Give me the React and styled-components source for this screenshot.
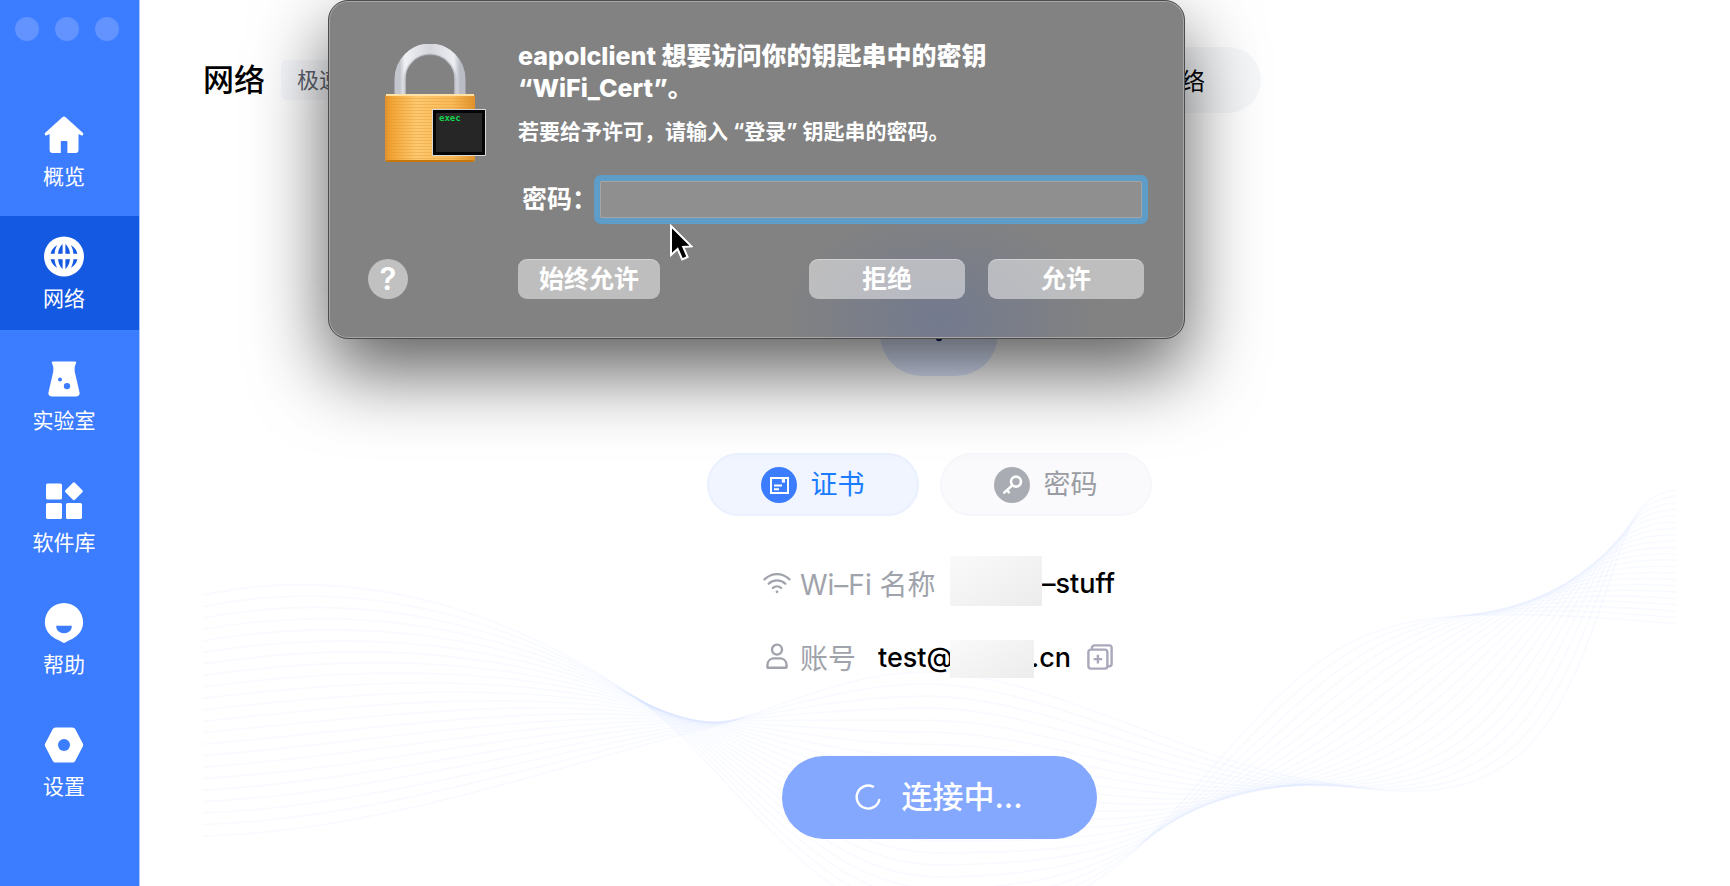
import React, { useState } from "react";
import styled, { createGlobalStyle } from "styled-components";

const NAV = [
  { id: "home", label: "概览", Icon: HomeIcon },
  { id: "network", label: "网络", Icon: GlobeIcon },
  { id: "lab", label: "实验室", Icon: FlaskIcon },
  { id: "apps", label: "软件库", Icon: AppsIcon },
  { id: "help", label: "帮助", Icon: HelpIcon },
  { id: "settings", label: "设置", Icon: SettingsIcon },
];

// first and last line of the background wave, the rest is blended between them
const WAVE_A = [
  [203, 595], [345, 565], [500, 600], [650, 708], [735, 775], [820, 925], [940, 925],
  [1050, 925], [1115, 880], [1190, 793], [1290, 680], [1335, 617], [1480, 615],
  [1550, 613], [1615, 618], [1676, 624],
];
const WAVE_B = [
  [203, 836], [380, 832], [560, 765], [715, 726], [785, 706], [850, 672], [925, 672],
  [1050, 672], [1200, 770], [1330, 783], [1520, 820], [1560, 730], [1610, 580],
  [1632, 510], [1645, 494], [1676, 490],
];
const WAVE_LINES = 22;

const wavePath = (k) => {
  const pts = WAVE_A.map(([x, y], i) => [
    x + (WAVE_B[i][0] - x) * k,
    y + (WAVE_B[i][1] - y) * k,
  ]);
  return `M${pts[0]} C${pts.slice(1).join(" ")}`;
};

export default function App() {
  const [page, setPage] = useState("network");
  const [method, setMethod] = useState("cert");
  const [password, setPassword] = useState("");

  return (
    <>
      <GlobalStyle />
      <Page>
        <Sidebar>
          <WindowDots>
            <i />
            <i />
            <i />
          </WindowDots>
          <Nav>
            {NAV.map(({ id, label, Icon }) => (
              <NavItem
                key={id}
                href={`#${id}`}
                $active={id === page}
                onClick={() => setPage(id)}
              >
                <Icon />
                <span>{label}</span>
              </NavItem>
            ))}
          </Nav>
        </Sidebar>

        <Main>
          <Wave viewBox="203 488 1473 398" aria-hidden="true">
            {Array.from({ length: WAVE_LINES }).map((_, i) => (
              <path key={i} d={wavePath(i / (WAVE_LINES - 1))} />
            ))}
          </Wave>

          <Header>
            <HeaderLeft>
              <h1>网络</h1>
              <Tag>极速</Tag>
            </HeaderLeft>
            <Segment>
              <span>网络</span>
            </Segment>
          </Header>

          <WifiTile>
            <WifiIcon size={64} />
          </WifiTile>

          <Methods>
            <Method type="button" $active={method === "cert"} onClick={() => setMethod("cert")}>
              <CertIcon />
              证书
            </Method>
            <Method type="button" $active={method === "pwd"} onClick={() => setMethod("pwd")}>
              <KeyIcon />
              密码
            </Method>
          </Methods>

          <Fields>
            <Field>
              <IconSlot>
                <WifiIcon size={28} />
              </IconSlot>
              <Label>Wi–Fi 名称</Label>
              <Redacted $tall />
              <Value>–stuff</Value>
            </Field>
            <Field>
              <IconSlot>
                <UserIcon />
              </IconSlot>
              <Label $short>账号</Label>
              <Value>test@</Value>
              <Redacted />
              <Value>.cn</Value>
              <CopyButton type="button" aria-label="复制">
                <CopyIcon />
              </CopyButton>
            </Field>
          </Fields>

          <Connect type="button">
            <Spinner viewBox="0 0 26 26">
              <path d="M18 2.6 A11.5 11.5 0 1 0 24.3 16" />
            </Spinner>
            连接中...
          </Connect>
        </Main>

        <Dialog role="dialog" aria-labelledby="keychain-title">
          <LockIcon />
          <DialogBody>
            <h2 id="keychain-title">
              eapolclient 想要访问你的钥匙串中的密钥
              <br />
              “WiFi_Cert”。
            </h2>
            <p>若要给予许可，请输入 “登录” 钥匙串的密码。</p>
            <PasswordRow>
              <label htmlFor="keychain-password">密码：</label>
              <input
                id="keychain-password"
                type="password"
                value={password}
                onChange={(e) => setPassword(e.target.value)}
              />
            </PasswordRow>
          </DialogBody>
          <HelpButton type="button">?</HelpButton>
          <Actions>
            <DialogButton type="button" $compact>
              始终允许
            </DialogButton>
            <DialogButton type="button">拒绝</DialogButton>
            <DialogButton type="button">允许</DialogButton>
          </Actions>
          <Pointer viewBox="0 0 24 38" aria-hidden="true">
            <path
              d="M2 2 L2 31 L8.6 25 L13.2 35.4 L18.6 33 L14.2 23 L22.4 22.4 Z"
              fill="#000"
              stroke="#fff"
              strokeWidth="2"
            />
          </Pointer>
        </Dialog>
      </Page>
    </>
  );
}

/* ---------------- icons ---------------- */

function HomeIcon() {
  return (
    <svg width="40" height="40" viewBox="0 0 40 40" fill="#fff">
      <path d="M18.6 2.6 a2 2 0 0 1 2.8 0 L39 18.4 a1.6 1.6 0 0 1 -2 2.4 L34.5 19.4 V35.5 a3 3 0 0 1 -3 3 H23.4 V27.5 a1 1 0 0 0 -1 -1 h-4.6 a1 1 0 0 0 -1 1 V38.5 H8.6 a3 3 0 0 1 -3 -3 V19.4 L3 20.8 a1.6 1.6 0 0 1 -2 -2.4 Z" />
    </svg>
  );
}

function GlobeIcon() {
  return (
    <svg width="40" height="40" viewBox="0 0 40 40">
      <circle cx="20" cy="20" r="20" fill="#fff" />
      <g fill="#1459e2">
        <path d="M14 17.2 C14.5 13 16.2 9.5 18.6 7.6 V17.2 Z M26 17.2 C25.5 13 23.8 9.5 21.4 7.6 V17.2 Z" />
        <path d="M14 22.8 C14.5 27 16.2 30.5 18.6 32.4 V22.8 Z M26 22.8 C25.5 27 23.8 30.5 21.4 32.4 V22.8 Z" />
        <path d="M6.6 17.2 C7.4 13.4 9.8 10.4 13.2 8.8 C11.6 11.4 10.8 14.2 10.6 17.2 Z M33.4 17.2 C32.6 13.4 30.2 10.4 26.8 8.8 C28.4 11.4 29.2 14.2 29.4 17.2 Z" />
        <path d="M6.6 22.8 C7.4 26.6 9.8 29.6 13.2 31.2 C11.6 28.6 10.8 25.8 10.6 22.8 Z M33.4 22.8 C32.6 26.6 30.2 29.6 26.8 31.2 C28.4 28.6 29.2 25.8 29.4 22.8 Z" />
      </g>
    </svg>
  );
}

function FlaskIcon() {
  return (
    <svg width="40" height="40" viewBox="0 0 40 40">
      <path
        d="M9 3 H31 a1.2 1.2 0 0 1 1.1 1.6 L30.8 8 C30.4 11 30.6 13 31.4 16 L35.6 34.2 a3 3 0 0 1 -3 3.7 H7.4 a3 3 0 0 1 -3 -3.7 L8.6 16 C9.4 13 9.6 11 9.2 8 L7.9 4.6 A1.2 1.2 0 0 1 9 3 Z"
        fill="#fff"
      />
      <circle cx="16" cy="21" r="2" fill="#3c7cff" />
      <circle cx="23" cy="27.6" r="3.2" fill="#3c7cff" />
    </svg>
  );
}

function AppsIcon() {
  return (
    <svg width="40" height="40" viewBox="0 0 40 40" fill="#fff">
      <rect x="2" y="3" width="16" height="16" rx="1.6" />
      <rect x="2" y="22.5" width="16" height="16" rx="1.6" />
      <rect x="22" y="22.5" width="16" height="16" rx="1.6" />
      <rect x="23.2" y="4.1" width="13.4" height="13.4" rx="1.4" transform="rotate(45 29.9 10.8)" />
    </svg>
  );
}

function HelpIcon() {
  return (
    <svg width="40" height="42" viewBox="0 0 40 42">
      <path
        d="M20 1 C31 1 39.6 9.6 39.6 21 C39.6 29.4 33.6 36 25.4 39.2 L21.2 41.4 a2.4 2.4 0 0 1 -2.4 0 L14.6 39.2 C6.4 36 .4 29.4 .4 21 C.4 9.6 9 1 20 1 Z"
        fill="#fff"
      />
      <path d="M12 24.4 H28 C28 29.2 24.6 32 20 32 C15.4 32 12 29.2 12 24.4 Z" fill="#3c7cff" />
    </svg>
  );
}

function SettingsIcon() {
  return (
    <svg width="40" height="40" viewBox="0 0 40 40">
      <path
        d="M11.4 3 H28.6 a3 3 0 0 1 2.6 1.5 L38.8 18.9 a3 3 0 0 1 0 3.2 L31.2 36.5 a3 3 0 0 1 -2.6 1.5 H11.4 a3 3 0 0 1 -2.6 -1.5 L1.2 22.1 a3 3 0 0 1 0 -3.2 L8.8 4.5 a3 3 0 0 1 2.6 -1.5 Z"
        fill="#fff"
      />
      <circle cx="20" cy="20.5" r="6" fill="#3c7cff" />
    </svg>
  );
}

function WifiIcon({ size }) {
  return (
    <svg
      width={size}
      height={size}
      viewBox="0 0 28 28"
      fill="none"
      stroke="currentColor"
      strokeWidth="2.2"
      strokeLinecap="round"
    >
      <path d="M1.5 10.4 C8.6 3.4 19.4 3.4 26.5 10.4" />
      <path d="M5.6 14.8 C10.4 10.2 17.6 10.2 22.4 14.8" />
      <path d="M9.8 19 C12.2 16.8 15.8 16.8 18.2 19" />
      <circle cx="14" cy="22.8" r="1.4" fill="currentColor" stroke="none" />
    </svg>
  );
}

function UserIcon() {
  return (
    <svg width="24" height="28" viewBox="0 0 24 28" fill="none" stroke="currentColor" strokeWidth="2.4">
      <circle cx="12" cy="6.6" r="5" />
      <path d="M2.4 22.4 C2.4 17.4 6 15.4 9 15.4 H15 C18 15.4 21.6 17.4 21.6 22.4 V24 a.8 .8 0 0 1 -.8 .8 H3.2 a.8 .8 0 0 1 -.8 -.8 Z" />
    </svg>
  );
}

function CopyIcon() {
  return (
    <svg width="26" height="26" viewBox="0 0 26 26" fill="none" stroke="currentColor" strokeWidth="2.4">
      <path d="M5 5.4 V3.6 A2.2 2.2 0 0 1 7.2 1.4 H22.4 A2.2 2.2 0 0 1 24.6 3.6 V20 A2.2 2.2 0 0 1 22.4 22.2 H20.6" />
      <rect x="1.4" y="5.6" width="19" height="19" rx="2.6" />
      <path d="M10.9 10.8 V19.4 M6.6 15.1 H15.2" />
    </svg>
  );
}

function CertIcon() {
  return (
    <svg width="36" height="36" viewBox="0 0 36 36" fill="none" stroke="#fff" strokeWidth="2">
      <circle cx="18" cy="18" r="18" fill="#3c7cff" stroke="none" />
      <rect x="10" y="11" width="17" height="15" />
      <path d="M13 18.6 H21 M13 22.2 H18" />
      <path d="M20.8 11 V15.6 H24 V11" fill="#fff" stroke="none" />
    </svg>
  );
}

function KeyIcon() {
  return (
    <svg width="36" height="36" viewBox="0 0 36 36" fill="none" stroke="#fff" strokeLinecap="round">
      <circle cx="18" cy="18" r="18" fill="#a9adb3" stroke="none" />
      <circle cx="22" cy="14.6" r="5" strokeWidth="2.6" />
      <path d="M18 18.6 L10.2 25.6" strokeWidth="2.6" />
      <path d="M13.2 23.4 L15 25.4" strokeWidth="2.4" />
    </svg>
  );
}

function LockIcon() {
  return (
    <LockArt viewBox="0 0 104 120" aria-hidden="true">
      <defs>
        <linearGradient id="steel" x1="0" y1="0" x2="1" y2="0">
          <stop offset="0" stopColor="#c3c6cd" />
          <stop offset=".08" stopColor="#f0f1f4" />
          <stop offset=".5" stopColor="#d4d6dc" />
          <stop offset=".9" stopColor="#eceef2" />
          <stop offset="1" stopColor="#b9bcc4" />
        </linearGradient>
        <linearGradient id="brass" x1="0" y1="0" x2="1" y2="0">
          <stop offset="0" stopColor="#e0912a" />
          <stop offset=".08" stopColor="#f3a637" />
          <stop offset=".35" stopColor="#fdc970" />
          <stop offset=".75" stopColor="#f9ba58" />
          <stop offset="1" stopColor="#e0912a" />
        </linearGradient>
        <pattern id="ribs" width="4" height="3" patternUnits="userSpaceOnUse">
          <rect width="4" height="1" fill="#e0922a" opacity=".35" />
        </pattern>
      </defs>
      <path d="M17 52 V35 A30 30 0 0 1 77 35 V52" fill="none" stroke="url(#steel)" strokeWidth="11" />
      <path d="M21.5 52 V36 A25.5 25.5 0 0 1 72.5 36 V52" fill="none" stroke="#9fa3ac" opacity=".4" strokeWidth="2" />
      <rect x="2" y="50" width="90" height="68" rx="3" fill="url(#brass)" />
      <rect x="2" y="52" width="90" height="63" fill="url(#ribs)" />
      <rect x="3" y="50" width="88" height="2" fill="#ffe2a4" />
      <rect x="3" y="116" width="88" height="2" rx="1" fill="#c6770c" />
      <rect x="49" y="65" width="54" height="47" rx="1" fill="#d6d9dc" />
      <rect x="50" y="66" width="52" height="45" fill="#050505" />
      <rect x="53" y="69" width="46" height="39" fill="#262626" />
      <text x="56" y="77" fill="#16d44e" fontSize="9" fontWeight="700" fontFamily="DejaVu Sans Mono, monospace">
        exec
      </text>
    </LockArt>
  );
}

/* ---------------- styled-components ---------------- */

const BLUE = "#3c7cff";
const BLUE_DARK = "#1459e2";
const MUTED = "#a0a3ab";

const GlobalStyle = createGlobalStyle`
  * {
    box-sizing: border-box;
  }

  body {
    margin: 0;
    background: #fff;
    color: #000;
    font-family: Inter, "Noto Sans CJK SC", sans-serif;
  }

  button,
  input {
    font: inherit;
  }

  button {
    border: none;
    padding: 0;
    cursor: pointer;
  }
`;

const Page = styled.div`
  position: relative;
  display: flex;
  min-height: 100vh;
  overflow: hidden;
`;

const Sidebar = styled.aside`
  flex: none;
  width: 140px;
  background: ${BLUE};
  border-right: 1px solid #a9c4ff;
`;

const WindowDots = styled.div`
  display: flex;
  gap: 16px;
  padding: 17px 15px 0;

  i {
    width: 24px;
    height: 24px;
    border-radius: 50%;
    background: #6293ff;
  }
`;

const Nav = styled.nav`
  display: flex;
  flex-direction: column;
  gap: 8px;
  margin-top: 53px;
`;

const NavItem = styled.a`
  display: flex;
  flex-direction: column;
  align-items: center;
  gap: 6px;
  height: 114px;
  padding: 20px 11px 0 0;
  background: ${(p) => (p.$active ? BLUE_DARK : "transparent")};
  color: #fff;
  font-size: 21px;
  line-height: 32px;
  text-decoration: none;

  svg {
    flex: none;
    height: 41px;
  }
`;

const Main = styled.main`
  position: relative;
  flex: 1;
  display: flex;
  flex-direction: column;
  align-items: center;
  padding: 47px 55px 47px 63px;
`;

const Wave = styled.svg`
  position: absolute;
  left: 63px;
  right: 54px;
  bottom: 0;
  width: calc(100% - 117px);
  fill: none;
  stroke: rgba(70, 115, 255, 0.035);
  stroke-width: 1.6;
`;

const Header = styled.header`
  align-self: stretch;
  display: grid;
  grid-template-columns: 1fr auto 1fr;
  align-items: center;

  h1 {
    margin: 0;
    font-size: 31px;
    font-weight: 500;
    line-height: 40px;
  }
`;

const HeaderLeft = styled.div`
  display: flex;
  align-items: center;
  gap: 16px;
`;

const Tag = styled.span`
  padding: 0 16px;
  border-radius: 6px;
  background: #f8f9fc;
  color: #606470;
  font-size: 22px;
  line-height: 40px;
`;

const Segment = styled.div`
  display: flex;
  justify-content: flex-end;
  width: 644px;
  padding: 4px 56px 0;
  border-radius: 33px;
  background: #f6f7f9;
  font-size: 24px;
  line-height: 62px;
`;

const WifiTile = styled.div`
  display: flex;
  justify-content: center;
  width: 118px;
  height: 118px;
  margin-top: 145px;
  padding-top: 28px;
  border-radius: 42px;
  background: #dfe8ff;
  color: #14205c;
`;

const Methods = styled.div`
  display: flex;
  gap: 21px;
  margin-top: 77px;
  padding-right: 20px;
`;

const Method = styled.button`
  display: flex;
  align-items: center;
  justify-content: center;
  gap: 14px;
  width: 212px;
  height: 63px;
  border: 2px solid ${(p) => (p.$active ? "#e9f0fe" : "#f6f7fa")};
  border-radius: 32px;
  background: ${(p) => (p.$active ? "#f1f5ff" : "#fafafc")};
  color: ${(p) => (p.$active ? "#1a7cff" : "#999ca3")};
  font-size: 27px;
  line-height: 36px;
`;

const Fields = styled.div`
  position: relative;
  display: flex;
  flex-direction: column;
  gap: 24px;
  width: 352px;
  margin-top: 42px;
`;

const Field = styled.div`
  display: flex;
  align-items: center;
  height: 50px;
  font-size: 27px;
  white-space: nowrap;
`;

const IconSlot = styled.span`
  flex: none;
  display: flex;
  justify-content: center;
  width: 28px;
  margin-right: 9px;
  color: ${MUTED};
`;

const Label = styled.span`
  width: ${(p) => (p.$short ? "78px" : "150px")};
  flex: none;
  color: ${MUTED};
  font-size: 28px;
`;

const Value = styled.span`
  font-weight: 500;
`;

const Redacted = styled.span`
  position: relative;
  flex: none;
  width: ${(p) => (p.$tall ? "92px" : "84px")};
  height: ${(p) => (p.$tall ? "50px" : "38px")};
  margin: ${(p) => (p.$tall ? "-4px 0 0" : "0 -3px -4px")};
  background: linear-gradient(150deg, #fafafb, #ececec);
`;

const CopyButton = styled.button`
  display: flex;
  margin-left: auto;
  margin-right: 2px;
  background: none;
  color: #a9a9bb;
`;

const Connect = styled.button`
  position: relative;
  display: flex;
  align-items: center;
  justify-content: center;
  gap: 20px;
  width: 315px;
  height: 83px;
  margin-top: 74px;
  padding-bottom: 2px;
  border-radius: 42px;
  background: #85a8ff;
  color: #fff;
  font-size: 31px;
  font-weight: 500;
  line-height: 40px;
`;

const Spinner = styled.svg`
  width: 26px;
  height: 26px;
  fill: none;
  stroke: #fff;
  stroke-width: 2.4;
  stroke-linecap: round;
`;

const Dialog = styled.section`
  position: absolute;
  top: 0;
  left: 328px;
  display: grid;
  grid-template-columns: 150px 1fr;
  row-gap: 41px;
  width: 857px;
  padding: 39px 40px 39px 39px;
  border: 1px solid #4c4c4c;
  border-radius: 20px;
  background: radial-gradient(ellipse 160px 110px at 611px 318px, #737a8e, transparent) #828282;
  box-shadow: inset 0 0 0 1px #a6a6a6, 0 32px 76px rgba(0, 0, 0, 0.64);
  color: #fff;
`;

const LockArt = styled.svg`
  width: 104px;
  height: 120px;
  margin: 4px 0 0 15px;
`;

const DialogBody = styled.div`
  h2 {
    margin: 0;
    font-size: 25px;
    font-weight: 800;
    line-height: 32px;
  }

  p {
    margin: 12px 0 0;
    font-size: 21px;
    font-weight: 700;
    line-height: 32px;
  }
`;

const PasswordRow = styled.div`
  display: flex;
  align-items: center;
  margin-top: 32px;
  padding: 0 2px 0 4px;
  font-size: 25px;
  font-weight: 700;

  label {
    width: 78px;
    line-height: 38px;
  }

  input {
    flex: 1;
    min-width: 0;
    height: 37px;
    padding: 0 8px;
    border: 1px solid #a5a5a5;
    border-radius: 1px;
    outline: 6px solid #5f9dc9;
    background: #8f8f8f;
    color: #fff;
  }
`;

const HelpButton = styled.button`
  width: 40px;
  height: 40px;
  border-radius: 50%;
  background: rgba(255, 255, 255, 0.5);
  color: #fff;
  font-size: 31px;
  font-weight: 600;
  line-height: 40px;
`;

const Actions = styled.div`
  display: flex;
  gap: 23px;

  button:first-child {
    margin-right: auto;
  }
`;

const DialogButton = styled.button`
  width: ${(p) => (p.$compact ? "142px" : "156px")};
  height: 40px;
  border-radius: 9px;
  background: rgba(255, 255, 255, 0.48);
  box-shadow: inset 0 1px 0 rgba(255, 255, 255, 0.3);
  color: #fff;
  font-size: 25px;
  font-weight: 700;
  line-height: 36px;
`;

const Pointer = styled.svg`
  position: absolute;
  top: 223px;
  left: 340px;
  width: 24px;
  height: 38px;
`;
